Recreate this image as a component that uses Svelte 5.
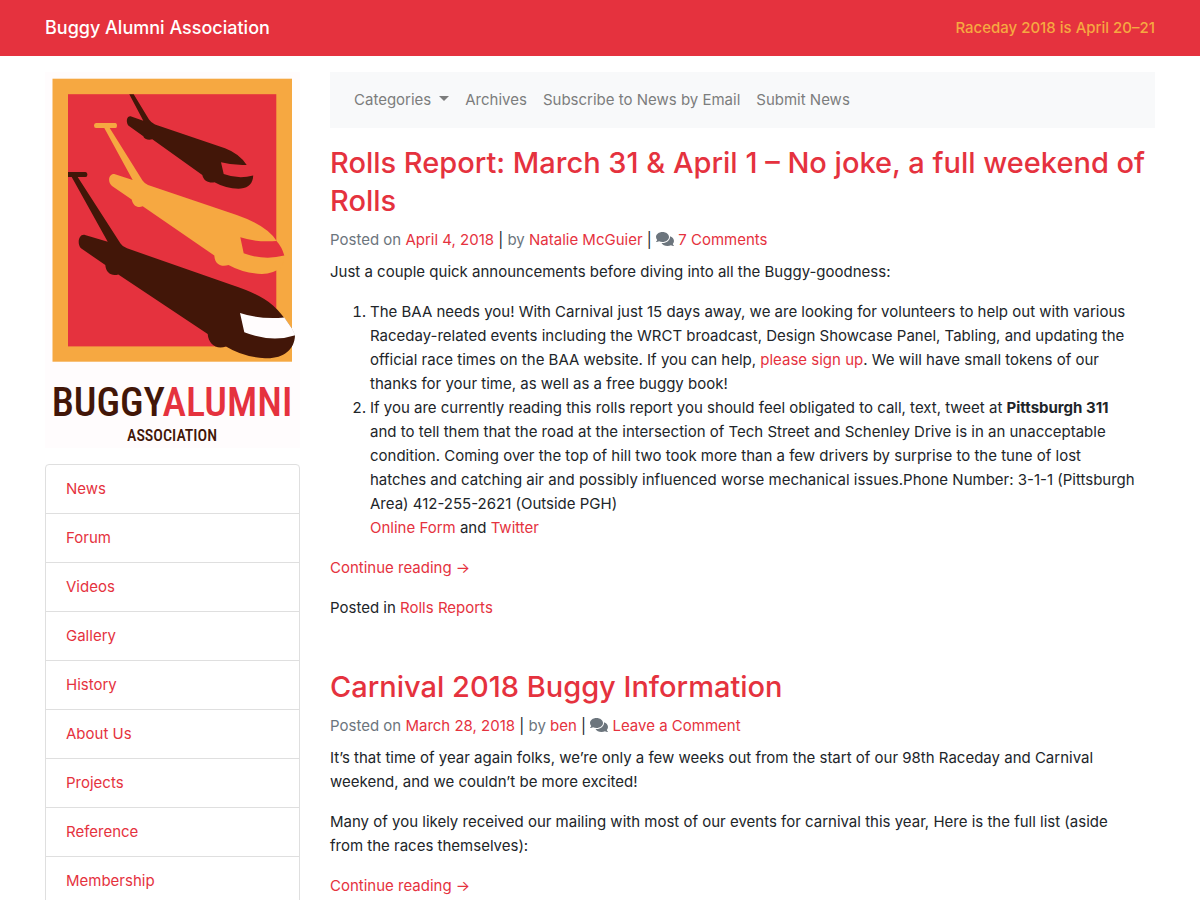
<script>
  const sections = ['News', 'Forum', 'Videos', 'Gallery', 'History', 'About Us', 'Projects', 'Reference', 'Membership'];
</script>

{#snippet comments()}
  <svg class="comments" viewBox="0 0 576 512" aria-hidden="true">
    <path d="M416 192c0-88.400-93.100-160-208-160S0 103.600 0 192c0 34.300 14.100 65.900 38 92-13.400 30.200-35.500 54.200-35.800 54.500-2.200 2.300-2.800 5.700-1.500 8.700S4.800 352 8 352c36.600 0 66.900-12.300 88.700-25 32.200 15.700 70.300 25 111.300 25 114.900 0 208-71.600 208-160zm122 220c23.900-26 38-57.700 38-92 0-66.900-53.500-124.200-129.300-148.100.9 6.600 1.300 13.300 1.300 20.100 0 105.900-107.700 192-240 192-10.800 0-21.300-.8-31.700-1.900C207.800 439.600 281.800 480 368 480c41 0 79.100-9.200 111.300-25 21.800 12.700 52.100 25 88.700 25 3.200 0 6.100-1.900 7.300-4.800 1.300-2.900.7-6.300-1.500-8.700-.3-.3-22.400-24.200-35.800-54.500z" />
  </svg>
{/snippet}

<header>
  <div class="container bar">
    <a class="brand" href="#home">Buggy Alumni Association</a>
    <a class="raceday" href="#raceday">Raceday 2018 is April 20–21</a>
  </div>
</header>

<div class="container columns">
  <aside>
    <a href="#home" class="logo" aria-label="Buggy Alumni Association">
      <svg viewBox="45 72 255 376" role="img" aria-hidden="true">
        <rect x="45" y="72" width="255" height="376" fill="#fffcfd" />
        <rect x="52.500" y="78.700" width="239.500" height="283" fill="#f6a841" />
        <rect x="68" y="94.200" width="208.300" height="252.200" fill="#e5323e" />
        <path fill="#421608" d="M129.300 94.200H133.700L149 119.500Q151 122.500 155 124.500L225 148.300Q239 153.500 246.700 164.900Q233 165.500 221 162.300L223.700 174Q238 179.500 253.200 175.600C253 183 249 188 241 188.600Q227 189.300 214.500 182.300C209 183.200 203.500 181 202.300 175L152.300 139.300C149 140.500 144 139.500 143.300 136.300L128.300 125.500C125.500 121 127 116 130.500 116.200L143.300 120.700Z" />
        <path fill="#f6a841" d="M96 123H115.500Q117 123 117 125.500T115.500 128H109.700L142.500 180.500Q144.500 183.500 148 184.900L236.700 215Q267 225.500 276.300 240.500L284.500 255.500L282 267Q273 274 261.700 273.900Q244 273.500 228.500 265C223 267 215 266 214.300 255.500L142.700 206.300C138 208.500 133 206 131.700 199.500L112 186C106.500 181 109.500 173 115 174.200L132.700 180L104.300 128H96Q94 128 94 125.500T96 123Z" />
        <path fill="#e5323e" d="M240.300 237.300Q257 242.600 276.500 241Q282 247 284.300 255.600Q264 260.700 243.700 253.300Z" />
        <path fill="#421608" d="M68 172H85.500Q87.400 172 87.400 174.500T85.500 177H77.700L120.500 243.500Q122.500 246.800 127 248.300L232 285Q261 294.500 273 305.500Q281 312.500 291.500 328L295 335.500C294.500 350 283 359 265 358.200Q243 357 226 346.500C216 350 208.500 344 207.700 334L118.300 274.500C111 276.500 106 272.500 105.300 265L81 248.300C76.500 243.500 79 233.500 85 235L107.700 241.700L71.700 177H68Z" />
        <path fill="#fffcfd" d="M240 313Q260 319.700 284.300 317.500L292 328.500L295.300 335.200Q272 343 244.300 332.300Z" />
        <text class="word" x="172" y="416" text-anchor="middle"><tspan fill="#421608">BUGGY</tspan><tspan fill="#e5323e">ALUMNI</tspan></text>
        <text class="sub" x="172" y="441" text-anchor="middle" fill="#421608">ASSOCIATION</text>
      </svg>
    </a>
    <nav class="sections" aria-label="Sections">
      {#each sections as name}
        <a href={'#' + name.toLowerCase().replace(' ', '-')}>{name}</a>
      {/each}
    </nav>
  </aside>

  <main>
    <nav class="tools" aria-label="News">
      <button type="button" aria-haspopup="true">Categories<span class="caret"></span></button>
      <a href="#archives">Archives</a>
      <a href="#subscribe">Subscribe to News by Email</a>
      <a href="#submit">Submit News</a>
    </nav>

    <article>
      <h2><a href="#rolls-report">Rolls Report: March 31 &amp; April 1 – No joke, a full weekend of Rolls</a></h2>
      <div class="meta">
        <span>Posted on</span> <a href="#april-4">April 4, 2018</a> | <span>by</span>
        <a href="#natalie">Natalie McGuier</a> | {@render comments()}
        <a href="#comments">7 Comments</a>
      </div>
      <p>Just a couple quick announcements before diving into all the Buggy-goodness:</p>
      <ol>
        <li>
          The BAA needs you! With Carnival just 15 days away, we are looking for volunteers to help out with various
          Raceday-related events including the WRCT broadcast, Design Showcase Panel, Tabling, and updating the
          official race times on the BAA website. If you can help, <a href="#sign-up">please sign up</a>. We will have
          small tokens of our thanks for your time, as well as a free buggy book!
        </li>
        <li>
          If you are currently reading this rolls report you should feel obligated to call, text, tweet at
          <strong>Pittsburgh 311</strong> and to tell them that the road at the intersection of Tech Street and
          Schenley Drive is in an unacceptable condition. Coming over the top of hill two took more than a few drivers
          by surprise to the tune of lost hatches and catching air and possibly influenced worse mechanical
          issues.Phone Number: 3-1-1 (Pittsburgh Area) 412-255-2621 (Outside PGH)<br />
          <a href="#form">Online Form</a> and <a href="#twitter">Twitter</a>
        </li>
      </ol>
      <p><a href="#rolls-report">Continue reading →</a></p>
      <p>Posted in <a href="#rolls">Rolls Reports</a></p>
    </article>

    <article>
      <h2><a href="#carnival">Carnival 2018 Buggy Information</a></h2>
      <div class="meta">
        <span>Posted on</span> <a href="#march-28">March 28, 2018</a> | <span>by</span>
        <a href="#ben">ben</a> | {@render comments()}
        <a href="#comment">Leave a Comment</a>
      </div>
      <p>
        It’s that time of year again folks, we’re only a few weeks out from the start of our 98th Raceday and Carnival
        weekend, and we couldn’t be more excited!
      </p>
      <p>
        Many of you likely received our mailing with most of our events for carnival this year, Here is the full list
        (aside from the races themselves):
      </p>
      <p><a href="#carnival">Continue reading →</a></p>
    </article>
  </main>
</div>

<style>
  :global(body) {
    margin: 0;
    background: #fff;
    color: #212529;
    font: 400 15px/24px Inter, 'Liberation Sans', sans-serif;
  }
  a {
    color: #e5323e;
    text-decoration: none;
  }
  header {
    background: #e5323e;
  }
  .container {
    box-sizing: border-box;
    max-width: 1140px;
    margin: 0 auto;
  }
  .bar {
    display: flex;
    align-items: center;
    justify-content: space-between;
    min-height: 56px;
    padding: 0 15px;
    font-weight: 500;
  }
  .brand {
    color: #fff;
    font-size: 18px;
  }
  .raceday {
    color: #f6a841;
  }
  .columns {
    display: flex;
    align-items: flex-start;
    padding-top: 16px;
  }
  aside,
  main {
    box-sizing: border-box;
    padding: 0 15px;
    min-width: 0;
  }
  aside {
    width: 25%;
  }
  main {
    width: 75%;
  }
  .logo,
  .logo svg {
    display: block;
    width: 100%;
  }
  .word,
  .sub {
    font-family: 'Roboto Condensed', 'Liberation Sans Narrow', sans-serif;
    font-weight: 500;
  }
  .word {
    font-size: 40px;
  }
  .sub {
    font-size: 16px;
  }
  .sections {
    margin-top: 16px;
    border: 1px solid #dfdfdf;
    border-radius: 4px;
  }
  .sections a {
    display: block;
    padding: 12px 20px;
  }
  .sections a + a {
    border-top: 1px solid #dfdfdf;
  }
  .tools {
    display: flex;
    flex-wrap: wrap;
    margin-bottom: 16px;
    padding: 8px 16px;
    background: #f8f9fa;
  }
  .tools a,
  .tools button {
    padding: 8px;
    border: 0;
    background: none;
    color: #7c7d7d;
    font: inherit;
  }
  .caret {
    display: inline-block;
    margin-left: 8px;
    vertical-align: 4px;
    border: 5px solid transparent;
    border-top-color: currentColor;
    border-bottom: 0;
  }
  h2 {
    margin: 0 0 8px;
    font-size: 29px;
    line-height: 38px;
    font-weight: 500;
  }
  .meta {
    margin-bottom: 8px;
  }
  .meta span {
    color: #6c757d;
  }
  .comments {
    width: 18px;
    height: 16px;
    vertical-align: -2px;
    fill: #6c757d;
  }
  p,
  ol {
    margin: 0 0 16px;
    padding-right: 18px;
  }
  ol {
    padding-left: 40px;
  }
  strong {
    font-weight: 700;
  }
  article + article {
    margin-top: 48px;
  }
</style>
